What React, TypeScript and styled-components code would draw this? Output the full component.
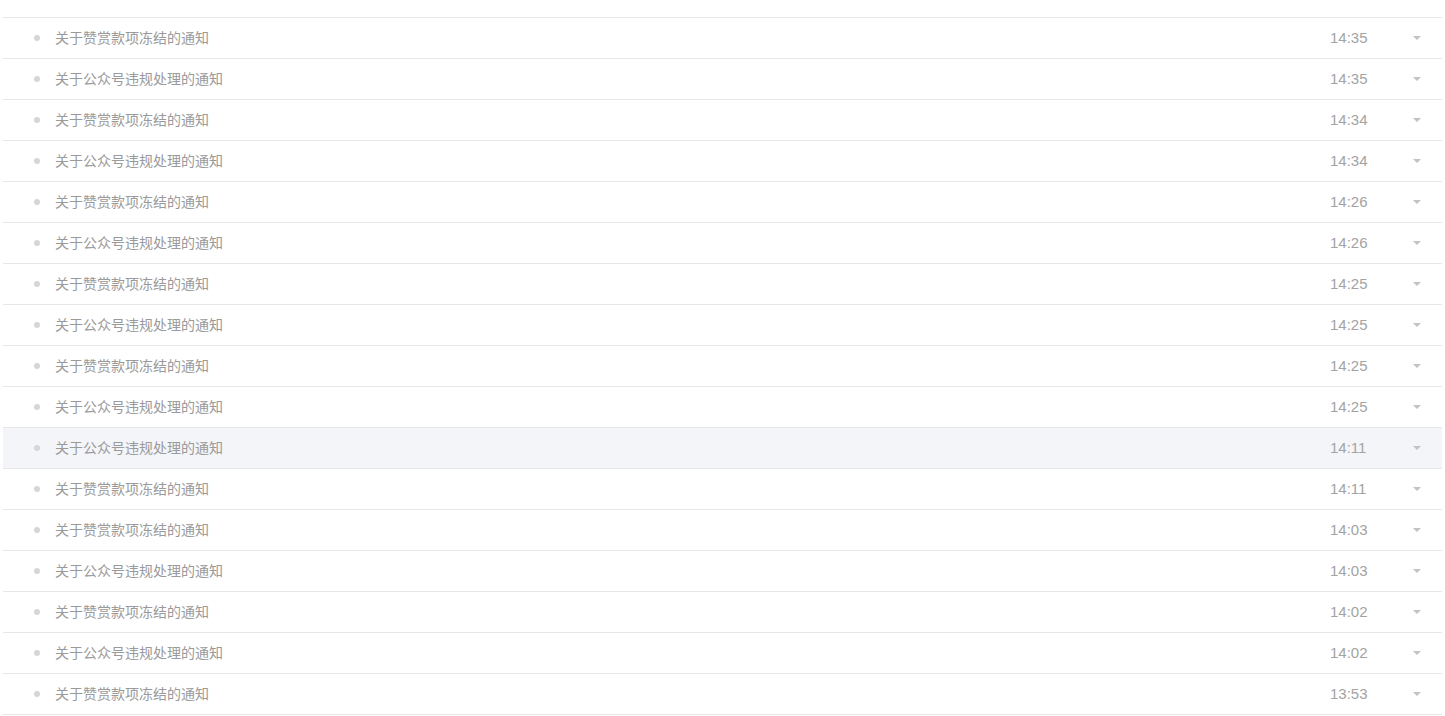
import styled, {createGlobalStyle} from 'styled-components';

interface Notice {
  title: string;
  time: string;
  active?: boolean;
}

const FREEZE = '关于赞赏款项冻结的通知';
const VIOLATION = '关于公众号违规处理的通知';

const notices: Notice[] = [
  {title: FREEZE, time: '14:35'},
  {title: VIOLATION, time: '14:35'},
  {title: FREEZE, time: '14:34'},
  {title: VIOLATION, time: '14:34'},
  {title: FREEZE, time: '14:26'},
  {title: VIOLATION, time: '14:26'},
  {title: FREEZE, time: '14:25'},
  {title: VIOLATION, time: '14:25'},
  {title: FREEZE, time: '14:25'},
  {title: VIOLATION, time: '14:25'},
  {title: VIOLATION, time: '14:11', active: true},
  {title: FREEZE, time: '14:11'},
  {title: FREEZE, time: '14:03'},
  {title: VIOLATION, time: '14:03'},
  {title: FREEZE, time: '14:02'},
  {title: VIOLATION, time: '14:02'},
  {title: FREEZE, time: '13:53'},
];

const GlobalStyle = createGlobalStyle`
  html, body {
    margin: 0;
    background: #fff;
    overflow: hidden;
  }

  body {
    font-family: "Liberation Sans", "Noto Sans CJK SC", sans-serif;
  }
`;

const List = styled.ul`
  border-top: 1px solid #e7e7eb;
  list-style: none;
  margin: 17px 3px 0;
  padding: 0;
`;

const Row = styled.li<{$active?: boolean}>`
  align-items: center;
  background-color: ${({$active}) => ($active ? '#f4f5f9' : '#fff')};
  border-bottom: 1px solid #e7e7eb;
  display: flex;
  height: 40px;
  padding: 0 21px 0 31px;
`;

const Dot = styled.span`
  background-color: #d6d6d6;
  border-radius: 50%;
  flex-shrink: 0;
  height: 6px;
  width: 6px;
`;

const Title = styled.span`
  color: #9a9a9a;
  flex: 1;
  font-size: 14px;
  line-height: 20px;
  margin-left: 15px;
`;

const Time = styled.span`
  color: #a3a3a3;
  font-size: 15px;
  line-height: 20px;
  width: 41px;
`;

const Caret = styled.span`
  border-left: 4px solid transparent;
  border-right: 4px solid transparent;
  border-top: 4px solid #c2c2c2;
  height: 0;
  margin-left: 42px;
  width: 0;
`;

const App = () => (
  <>
    <GlobalStyle />
    <List>
      {notices.map((notice, i) => (
        <Row key={i} $active={notice.active}>
          <Dot />
          <Title>{notice.title}</Title>
          <Time>{notice.time}</Time>
          <Caret />
        </Row>
      ))}
    </List>
  </>
);

export default App;
